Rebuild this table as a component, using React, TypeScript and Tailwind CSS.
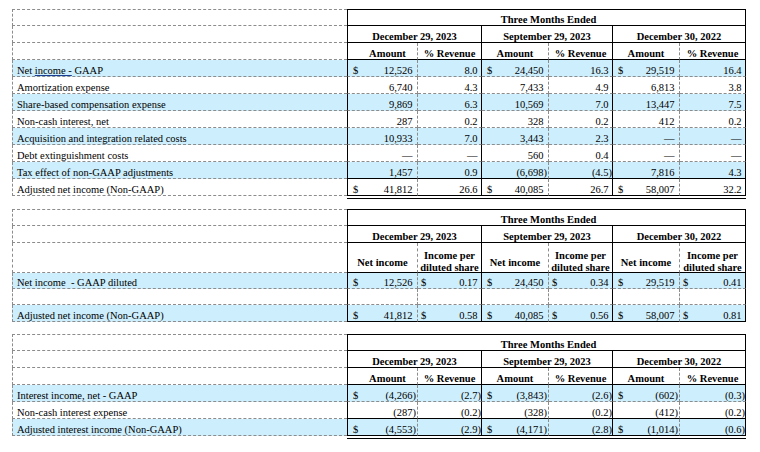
import clsx from "clsx";

const tDash = "[border-top:1px_dashed_#8c8c8c]";
const lDash = "[border-left:1px_dashed_#8c8c8c]";
const bDash = "[border-bottom:1px_dashed_#8c8c8c]";
const rDash = "[border-right:1px_dashed_#8c8c8c]";
const tSolid = "[border-top:1px_solid_#000]";
const lSolid = "[border-left:1px_solid_#000]";
const bSolid = "[border-bottom:1px_solid_#000]";
const rSolid = "[border-right:1px_solid_#000]";

const COLS = "grid grid-cols-[335px_71px_64px_67px_64px_67px_66px]";

type Cell = { v: string; d?: boolean };
type Row = {
  label: React.ReactNode;
  blue?: boolean;
  line: "solid" | "dashed";
  h: "h-[17px]" | "h-[16px]";
  cells: Cell[];
};

const NumCell = ({ c, i, row, perShare }: { c: Cell; i: number; row: Row; perShare?: boolean }) => {
  const pct = i % 2 === 1;
  const paren = c.v.endsWith(")");
  return (
    <div
      className={clsx(
        "flex items-end justify-between leading-[11px]",
        row.h,
        row.blue && "bg-[#cdeefc]",
        row.line === "solid" ? bSolid : bDash,
        pct ? rSolid : rDash,
        i === 0 && lSolid,
        pct && !perShare ? "pl-[3px]" : pct ? "pl-[3px]" : "pl-[5px]",
        pct
          ? paren
            ? "pr-0"
            : "pr-[3.5px]"
          : paren
            ? "pr-[1px]"
            : "pr-[4.5px]"
      )}
    >
      <span>{c.d ? "$" : ""}</span>
      <span>{c.v}</span>
    </div>
  );
};

const LabelCell = ({ row, first }: { row: Row; first?: boolean }) => (
  <div
    className={clsx(
      "flex items-end pl-[4px] leading-[11px] whitespace-nowrap",
      row.h,
      row.blue && "bg-[#cdeefc]",
      lDash,
      bDash,
      first && tDash
    )}
  >
    {row.label}
  </div>
);

const Blank = ({ h, top }: { h: string; top?: boolean }) => (
  <div className={clsx(h, lDash, bDash, top && tDash)} />
);

const Table = ({
  rows,
  perShare,
  double,
}: {
  rows: Row[];
  perShare?: boolean;
  double?: boolean;
}) => {
  const dates = ["December 29, 2023", "September 29, 2023", "December 30, 2022"];
  const colHeads = perShare
    ? ["Net income", "Income per diluted share"]
    : ["Amount", "% Revenue"];
  return (
    <div className={COLS}>
      {/* row 1 */}
      <Blank h="h-[17px]" top />
      <div
        className={clsx(
          "col-span-6 flex h-[17px] items-end justify-center pl-[4px] font-bold leading-[11px]",
          tSolid,
          lSolid,
          rSolid,
          bSolid
        )}
      >
        Three Months Ended
      </div>

      {/* row 2 */}
      <Blank h="h-[17px]" />
      {dates.map((d, i) => (
        <div
          key={d}
          className={clsx(
            "col-span-2 flex h-[17px] items-end justify-center font-bold leading-[11px]",
            i === 0 && lSolid,
            rSolid,
            bSolid
          )}
        >
          {d}
        </div>
      ))}

      {/* row 3 */}
      <Blank h={perShare ? "h-[30px]" : "h-[17px]"} />
      {[0, 1, 2, 3, 4, 5].map((i) => (
        <div
          key={i}
          className={clsx(
            "flex justify-center text-center font-bold",
            perShare ? "h-[30px] overflow-hidden" : "h-[17px]",
            perShare && i % 2 === 1 ? "items-end leading-[12px]" : "items-end leading-[11px]",
            perShare && i % 2 === 0 && "pb-[4px]",
            i === 0 && lSolid,
            i === 0 && !perShare && "pl-[10px]",
            i % 2 === 1 ? rSolid : rDash,
            bSolid
          )}
        >
          {perShare && i % 2 === 1 ? (
            <span className="translate-y-[2px]">
              Income per
              <br />
              diluted share
            </span>
          ) : (
            colHeads[i % 2]
          )}
        </div>
      ))}

      {rows.map((row, r) => (
        <div key={r} className="contents">
          <LabelCell row={row} />
          {row.cells.map((c, i) => (
            <NumCell key={i} c={c} i={i} row={row} perShare={perShare} />
          ))}
        </div>
      ))}

      {double && (
        <>
          <div />
          <div className="col-span-6 mt-[2px] h-px bg-black" />
        </>
      )}
    </div>
  );
};

const table1: Row[] = [
  {
    label: (
      <span>
        Net{" "}
        <span className="underline decoration-[#1c3f94] underline-offset-[1px]">income -</span> GAAP
      </span>
    ),
    blue: true,
    line: "dashed",
    h: "h-[17px]",
    cells: [
      { v: "12,526", d: true },
      { v: "8.0" },
      { v: "24,450", d: true },
      { v: "16.3" },
      { v: "29,519", d: true },
      { v: "16.4" },
    ],
  },
  {
    label: "Amortization expense",
    line: "dashed",
    h: "h-[17px]",
    cells: [{ v: "6,740" }, { v: "4.3" }, { v: "7,433" }, { v: "4.9" }, { v: "6,813" }, { v: "3.8" }],
  },
  {
    label: "Share-based compensation expense",
    blue: true,
    line: "dashed",
    h: "h-[17px]",
    cells: [{ v: "9,869" }, { v: "6.3" }, { v: "10,569" }, { v: "7.0" }, { v: "13,447" }, { v: "7.5" }],
  },
  {
    label: "Non-cash interest, net",
    line: "dashed",
    h: "h-[17px]",
    cells: [{ v: "287" }, { v: "0.2" }, { v: "328" }, { v: "0.2" }, { v: "412" }, { v: "0.2" }],
  },
  {
    label: "Acquisition and integration related costs",
    blue: true,
    line: "dashed",
    h: "h-[17px]",
    cells: [{ v: "10,933" }, { v: "7.0" }, { v: "3,443" }, { v: "2.3" }, { v: "—" }, { v: "—" }],
  },
  {
    label: "Debt extinguishment costs",
    line: "dashed",
    h: "h-[17px]",
    cells: [{ v: "—" }, { v: "—" }, { v: "560" }, { v: "0.4" }, { v: "—" }, { v: "—" }],
  },
  {
    label: "Tax effect of non-GAAP adjustments",
    blue: true,
    line: "solid",
    h: "h-[17px]",
    cells: [{ v: "1,457" }, { v: "0.9" }, { v: "(6,698)" }, { v: "(4.5)" }, { v: "7,816" }, { v: "4.3" }],
  },
  {
    label: "Adjusted net income (Non-GAAP)",
    line: "solid",
    h: "h-[17px]",
    cells: [
      { v: "41,812", d: true },
      { v: "26.6" },
      { v: "40,085", d: true },
      { v: "26.7" },
      { v: "58,007", d: true },
      { v: "32.2" },
    ],
  },
];

const table2: Row[] = [
  {
    label: "Net income\u00a0 - GAAP diluted",
    blue: true,
    line: "dashed",
    h: "h-[16px]",
    cells: [
      { v: "12,526", d: true },
      { v: "0.17", d: true },
      { v: "24,450", d: true },
      { v: "0.34", d: true },
      { v: "29,519", d: true },
      { v: "0.41", d: true },
    ],
  },
  {
    label: "",
    line: "dashed",
    h: "h-[16px]",
    cells: [{ v: "" }, { v: "" }, { v: "" }, { v: "" }, { v: "" }, { v: "" }],
  },
  {
    label: "Adjusted net income (Non-GAAP)",
    blue: true,
    line: "solid",
    h: "h-[17px]",
    cells: [
      { v: "41,812", d: true },
      { v: "0.58", d: true },
      { v: "40,085", d: true },
      { v: "0.56", d: true },
      { v: "58,007", d: true },
      { v: "0.81", d: true },
    ],
  },
];

const table3: Row[] = [
  {
    label: "Interest income, net - GAAP",
    blue: true,
    line: "dashed",
    h: "h-[17px]",
    cells: [
      { v: "(4,266)", d: true },
      { v: "(2.7)" },
      { v: "(3,843)", d: true },
      { v: "(2.6)" },
      { v: "(602)", d: true },
      { v: "(0.3)" },
    ],
  },
  {
    label: "Non-cash interest expense",
    line: "solid",
    h: "h-[17px]",
    cells: [{ v: "(287)" }, { v: "(0.2)" }, { v: "(328)" }, { v: "(0.2)" }, { v: "(412)" }, { v: "(0.2)" }],
  },
  {
    label: "Adjusted interest income (Non-GAAP)",
    blue: true,
    line: "solid",
    h: "h-[17px]",
    cells: [
      { v: "(4,553)", d: true },
      { v: "(2.9)" },
      { v: "(4,171)", d: true },
      { v: "(2.8)" },
      { v: "(1,014)", d: true },
      { v: "(0.6)" },
    ],
  },
];

export default function App() {
  return (
    <div className="h-[452px] w-[760px] overflow-hidden bg-white pl-[12px] pt-[9px] font-['Liberation_Serif','Times_New_Roman',serif] text-[10.5px] text-black">
      <div className="flex flex-col">
        <Table rows={table1} double />
        <div className="mt-[10px]">
          <Table rows={table2} perShare />
        </div>
        <div className="mt-[12px]">
          <Table rows={table3} double />
        </div>
      </div>
    </div>
  );
}
